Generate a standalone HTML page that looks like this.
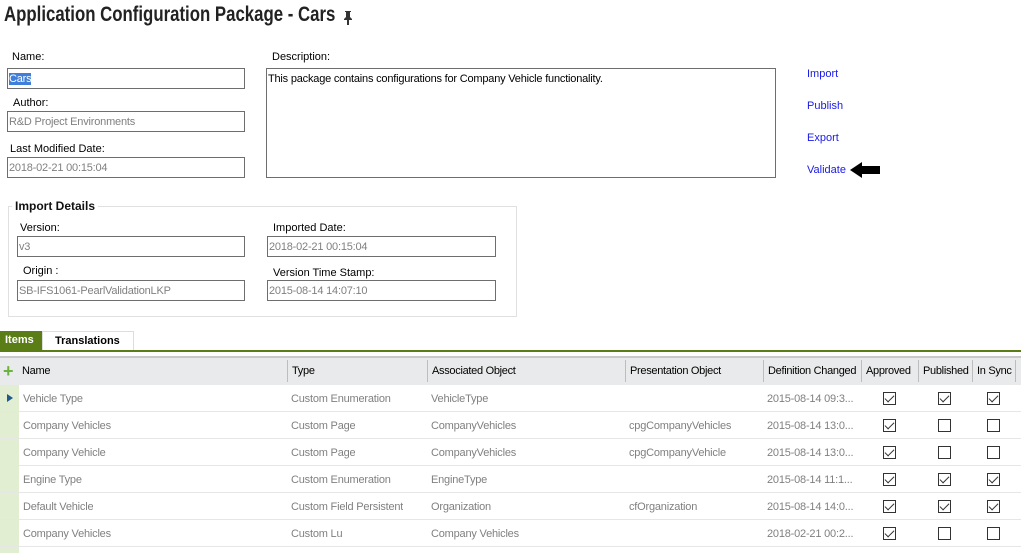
<!DOCTYPE html><html><head><style>
*{box-sizing:border-box;margin:0;padding:0}
body{width:1021px;height:553px;overflow:hidden;background:#fff;font-family:"Liberation Sans",sans-serif;font-size:11px;color:#000;position:relative}
.a{position:absolute;white-space:nowrap}
.in{position:absolute;border:1px solid #6e6e6e;height:21px;padding:3px 1px 1px;color:#808080;font-size:11px;line-height:15px;background:#fff;letter-spacing:-0.2px}
.lbl{position:absolute;font-size:11px;color:#000;margin-top:1px}
.lnk{position:absolute;color:#1a1ae6;font-size:11px;margin-top:1px}
.g{position:absolute;left:0;width:1021px}
.c{position:absolute;top:1px;height:27px;line-height:27px;color:#808080;white-space:nowrap;overflow:hidden;letter-spacing:-0.2px}
.h{position:absolute;color:#000;border-left:1px solid #bdbdbd;padding-left:4px;top:2px;height:22px;line-height:23px;letter-spacing:-0.3px;white-space:nowrap}
.cb{position:absolute;top:7px;width:13px;height:13px;border:1px solid #333;background:#fff}
.cb.k::after{content:"";position:absolute;left:3px;top:0px;width:4px;height:8px;border:solid #333;border-width:0 1.5px 1.5px 0;transform:rotate(45deg)}
</style></head><body>
<div class="a" style="left:4px;top:3px;font-size:21px;font-weight:bold;color:#222;transform:scaleX(0.8);transform-origin:left">Application Configuration Package - Cars</div>
<svg class="a" style="left:342px;top:11px" width="12" height="14" viewBox="0 0 12 14"><path d="M3 0h6v1H8v5l2 2v1H7v5H5V9H2V8l2-2V1H3z" fill="#333"/></svg>

<div class="lbl" style="left:12px;top:50px">Name:</div>
<div class="in" style="left:7px;top:68px;width:238px;color:#fff"><span style="background:#3f7fd9;color:#fff">Cars</span></div>
<div class="lbl" style="left:13px;top:96px">Author:</div>
<div class="in" style="left:7px;top:111px;width:238px">R&amp;D Project Environments</div>
<div class="lbl" style="left:10px;top:142px">Last Modified Date:</div>
<div class="in" style="left:7px;top:157px;width:238px">2018-02-21 00:15:04</div>

<div class="lbl" style="left:272px;top:50px">Description:</div>
<div class="in" style="left:266px;top:68px;width:510px;height:110px;color:#000">This package contains configurations for Company Vehicle functionality.</div>

<div class="lnk" style="left:807px;top:67px">Import</div>
<div class="lnk" style="left:807px;top:99px">Publish</div>
<div class="lnk" style="left:807px;top:131px">Export</div>
<div class="lnk" style="left:807px;top:163px">Validate</div>
<svg class="a" style="left:849px;top:161px" width="32" height="18" viewBox="0 0 32 18"><path d="M1 9L13 1V5H31V13H13V17Z" fill="#000"/></svg>

<div class="a" style="left:8px;top:206px;width:509px;height:111px;border:1px solid #e0e0e0"></div>
<div class="a" style="left:12px;top:199px;background:#fff;padding:0 3px;font-weight:bold;font-size:12px;color:#111">Import Details</div>
<div class="lbl" style="left:20px;top:221px">Version:</div>
<div class="in" style="left:17px;top:236px;width:228px">v3</div>
<div class="lbl" style="left:23px;top:264px">Origin :</div>
<div class="in" style="left:17px;top:280px;width:228px">SB-IFS1061-PearlValidationLKP</div>
<div class="lbl" style="left:273px;top:221px">Imported Date:</div>
<div class="in" style="left:267px;top:236px;width:229px">2018-02-21 00:15:04</div>
<div class="lbl" style="left:273px;top:266px">Version Time Stamp:</div>
<div class="in" style="left:267px;top:280px;width:229px">2015-08-14 14:07:10</div>

<div class="a" style="left:0;top:331px;width:42px;height:19px;background:#5a7d16;color:#fff;font-weight:bold;line-height:19px;padding-left:5px">Items</div>
<div class="a" style="left:42px;top:331px;width:92px;height:19px;border:1px solid #ddd;border-bottom:none;font-weight:bold;line-height:19px;padding-left:12px">Translations</div>
<div class="g" style="top:350px;height:2px;background:#5a7d16"></div>
<div class="g" style="top:356px;height:2px;background:#c8c8c8"></div>

<div class="g" style="top:358px;height:27px;background:#e9eaeb">
<div class="a" style="left:3px;top:3px;color:#6cb33e;font-size:18px;font-weight:bold;line-height:20px">+</div>
<div class="h" style="left:18px;border:none">Name</div>
<div class="h" style="left:287px">Type</div>
<div class="h" style="left:427px">Associated Object</div>
<div class="h" style="left:625px">Presentation Object</div>
<div class="h" style="left:763px">Definition Changed</div>
<div class="h" style="left:861px">Approved</div>
<div class="h" style="left:918px">Published</div>
<div class="h" style="left:972px">In Sync</div>
<div class="h" style="left:1015px"></div>
</div>
<div class="a" style="left:0;top:385px;width:19px;height:168px;background:#e2eed2"></div>
<div class="a" style="left:7px;top:394px;width:0;height:0;border-left:6px solid #1e5a8a;border-top:4px solid transparent;border-bottom:4px solid transparent"></div>

<div class="g" style="top:385px;height:27px;border-bottom:1px solid #e6e6e6"><div class="c" style="left:23px">Vehicle Type</div><div class="c" style="left:291px">Custom Enumeration</div><div class="c" style="left:431px">VehicleType</div><div class="c" style="left:767px">2015-08-14 09:3...</div><div class="cb k" style="left:883px"></div><div class="cb k" style="left:938px"></div><div class="cb k" style="left:987px"></div></div>
<div class="g" style="top:412px;height:27px;border-bottom:1px solid #e6e6e6"><div class="c" style="left:23px">Company Vehicles</div><div class="c" style="left:291px">Custom Page</div><div class="c" style="left:431px">CompanyVehicles</div><div class="c" style="left:629px">cpgCompanyVehicles</div><div class="c" style="left:767px">2015-08-14 13:0...</div><div class="cb k" style="left:883px"></div><div class="cb" style="left:938px"></div><div class="cb" style="left:987px"></div></div>
<div class="g" style="top:439px;height:27px;border-bottom:1px solid #e6e6e6"><div class="c" style="left:23px">Company Vehicle</div><div class="c" style="left:291px">Custom Page</div><div class="c" style="left:431px">CompanyVehicles</div><div class="c" style="left:629px">cpgCompanyVehicle</div><div class="c" style="left:767px">2015-08-14 13:0...</div><div class="cb k" style="left:883px"></div><div class="cb" style="left:938px"></div><div class="cb" style="left:987px"></div></div>
<div class="g" style="top:466px;height:27px;border-bottom:1px solid #e6e6e6"><div class="c" style="left:23px">Engine Type</div><div class="c" style="left:291px">Custom Enumeration</div><div class="c" style="left:431px">EngineType</div><div class="c" style="left:767px">2015-08-14 11:1...</div><div class="cb k" style="left:883px"></div><div class="cb k" style="left:938px"></div><div class="cb k" style="left:987px"></div></div>
<div class="g" style="top:493px;height:27px;border-bottom:1px solid #e6e6e6"><div class="c" style="left:23px">Default Vehicle</div><div class="c" style="left:291px">Custom Field Persistent</div><div class="c" style="left:431px">Organization</div><div class="c" style="left:629px">cfOrganization</div><div class="c" style="left:767px">2015-08-14 14:0...</div><div class="cb k" style="left:883px"></div><div class="cb k" style="left:938px"></div><div class="cb k" style="left:987px"></div></div>
<div class="g" style="top:520px;height:27px;border-bottom:1px solid #e6e6e6"><div class="c" style="left:23px">Company Vehicles</div><div class="c" style="left:291px">Custom Lu</div><div class="c" style="left:431px">Company Vehicles</div><div class="c" style="left:767px">2018-02-21 00:2...</div><div class="cb k" style="left:883px"></div><div class="cb" style="left:938px"></div><div class="cb" style="left:987px"></div></div>
</body></html>
